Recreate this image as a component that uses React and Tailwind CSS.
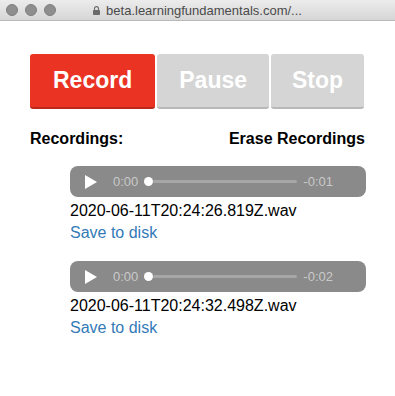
import React from 'react';

const recordings = [
    { id: 1, name: '2020-06-11T20:24:26.819Z.wav', remaining: '-0:01' },
    { id: 2, name: '2020-06-11T20:24:32.498Z.wav', remaining: '-0:02' },
];

const AudioBar = ({ remaining }) => (
    <div className="flex items-center h-[31px] w-full rounded-[8px] bg-[#8a8a8a] pl-[15px] pr-[33px]">
        <svg width="12" height="14" viewBox="0 0 12 14">
            <path d="M0 0 L12 7 L0 14 Z" fill="#ffffff" />
        </svg>
        <span className="ml-[16px] text-[13px] text-[#c9c9c9] leading-none">0:00</span>
        <div className="ml-[6px] w-[9px] h-[9px] rounded-full bg-white shrink-0" />
        <div className="flex-1 h-[3px] bg-[#a6a6a6] rounded-full" />
        <span className="ml-[6px] text-[13px] text-[#c9c9c9] leading-none">{remaining}</span>
    </div>
);

const App = () => {
    return (
        <div className="w-[395px] h-[396px] bg-white font-['Liberation_Sans',Arial,sans-serif] overflow-hidden">
            <div className="relative h-[21px] bg-gradient-to-b from-[#ececec] to-[#d6d6d6] border-b border-[#b9b9b9] flex items-center">
                <div className="flex items-center gap-[7px] pl-[6px]">
                    <div className="w-[12px] h-[12px] rounded-full bg-[#8e8e8e] border border-[#7f7f7f]" />
                    <div className="w-[12px] h-[12px] rounded-full bg-[#8e8e8e] border border-[#7f7f7f]" />
                    <div className="w-[12px] h-[12px] rounded-full bg-[#8e8e8e] border border-[#7f7f7f]" />
                </div>
                <div className="absolute inset-0 flex items-center justify-center gap-[6px]">
                    <svg width="7" height="9" viewBox="0 0 7 9">
                        <path d="M1.5 4 V2.6 A2 2 0 0 1 5.5 2.6 V4" fill="none" stroke="#6b6b6b" strokeWidth="1.1" />
                        <rect x="0" y="4" width="7" height="5" rx="0.8" fill="#6b6b6b" />
                    </svg>
                    <span className="text-[13px] text-[#4a4a4a] leading-none">beta.learningfundamentals.com/...</span>
                </div>
            </div>

            <div className="px-[30px] pt-[33px]">
                <div className="flex gap-[2px]">
                    <button className="h-[55px] px-[23px] rounded-[3px] bg-[#ea3323] border-b-2 border-[#b92a1c] text-white text-[23px] font-bold">
                        Record
                    </button>
                    <button className="h-[55px] px-[22px] rounded-[3px] bg-[#d5d5d5] border-b-2 border-[#b8b8b8] text-white text-[23px] font-bold">
                        Pause
                    </button>
                    <button className="h-[55px] px-[21px] rounded-[3px] bg-[#d5d5d5] border-b-2 border-[#b8b8b8] text-white text-[23px] font-bold">
                        Stop
                    </button>
                </div>

                <div className="flex justify-between mt-[20px] text-[16px] leading-[20px] font-bold text-black">
                    <span>Recordings:</span>
                    <span>Erase Recordings</span>
                </div>

                <div className="ml-[40px] mr-[-1px]">
                    {recordings.map((rec, i) => (
                        <div key={rec.id} className={i === 0 ? 'mt-[17px]' : 'mt-[18px]'}>
                            <AudioBar remaining={rec.remaining} />
                            <div className="mt-[4px] text-[16px] leading-[20px] text-black">{rec.name}</div>
                            <a href="#" className="block mt-[2px] text-[16px] leading-[20px] text-[#337ab7]">
                                Save to disk
                            </a>
                        </div>
                    ))}
                </div>
            </div>
        </div>
    );
};

export default App;
